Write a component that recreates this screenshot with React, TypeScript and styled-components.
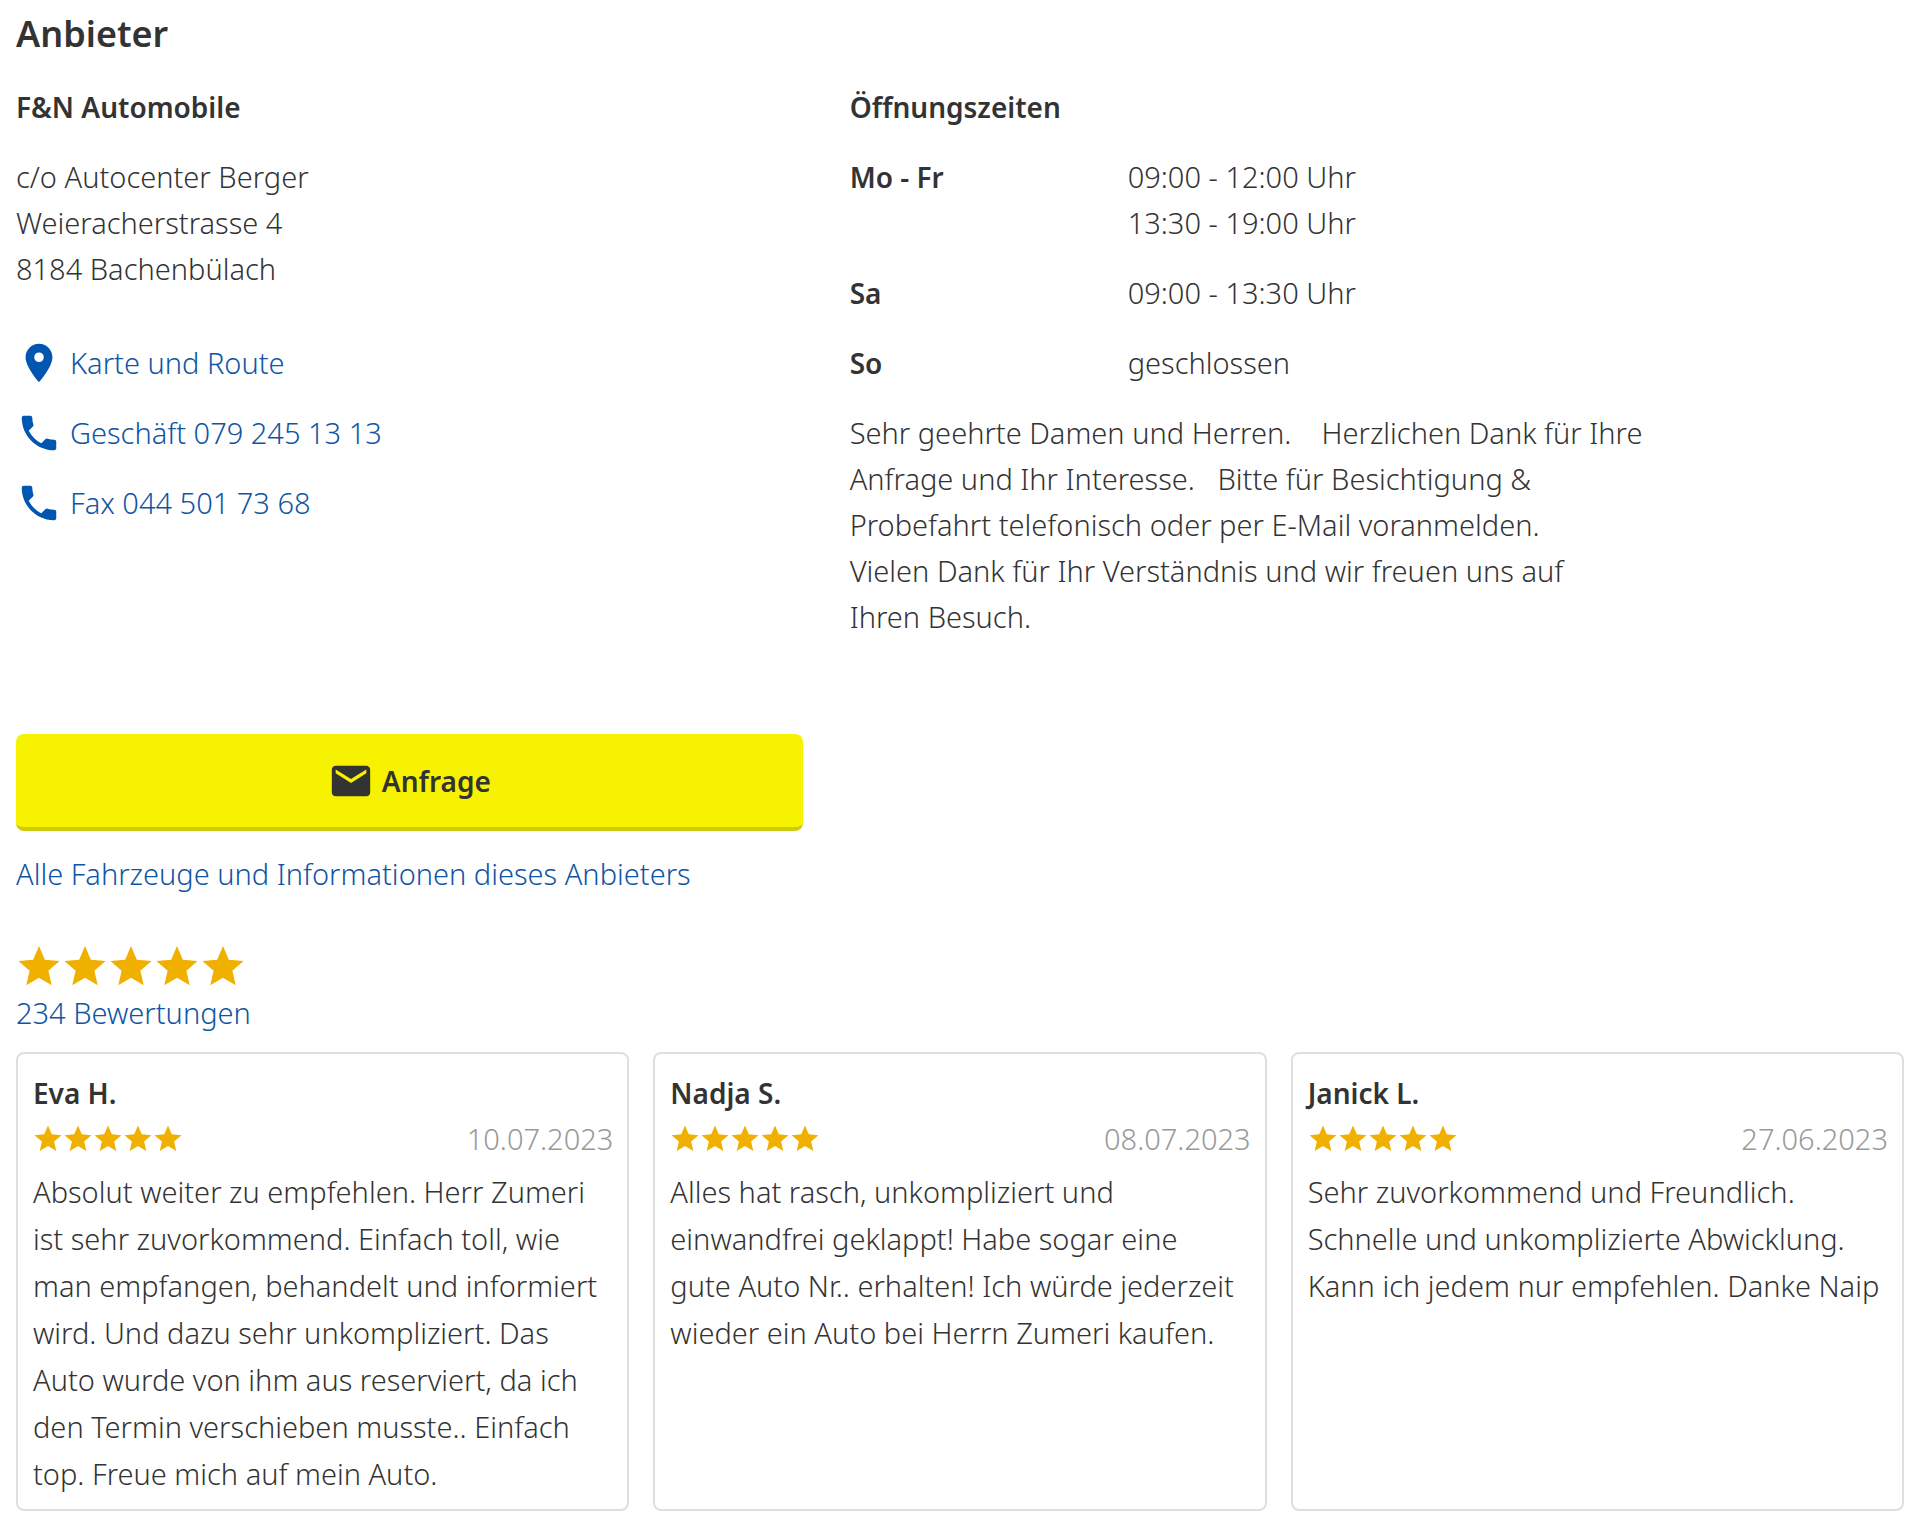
import React from 'react';
import styled, { createGlobalStyle } from 'styled-components';

const color = {
  text: '#333333',
  link: '#0f55a5',
  linkIcon: '#0056b0',
  muted: '#999999',
  star: '#f0b000',
  border: '#dfdfdf',
  action: '#f7f200',
  actionEdge: '#cccb0c',
};

const GlobalStyle = createGlobalStyle`
  *, *::before, *::after { box-sizing: border-box; }
  body {
    margin: 0;
    background: #ffffff;
    color: ${color.text};
    font-family: "Noto Sans", "Open Sans", sans-serif;
    font-size: 29px;
    font-weight: 350;
    line-height: 46px;
  }
`;

const Page = styled.main`
  padding: 8px 16px 14px;
`;

const Title = styled.h2`
  margin: 0 0 24px;
  font-size: 36px;
  font-weight: 560;
  line-height: 52px;
`;

const Columns = styled.div`
  display: grid;
  grid-template-columns: 5fr 7fr;
`;

const HoursColumn = styled.section`
  padding-left: 47px;
`;

const Subtitle = styled.h3`
  margin: 0 0 24px;
  font-size: 28px;
  font-weight: 600;
  line-height: 46px;
`;

const Address = styled.address`
  margin-bottom: 48px;
  font-style: normal;
`;

const ContactList = styled.ul`
  display: flex;
  flex-direction: column;
  align-items: flex-start;
  gap: 24px;
  margin: 0;
  padding: 0;
  list-style: none;
`;

const Link = styled.a`
  color: ${color.link};
  text-decoration: none;
  &:hover { text-decoration: underline; }
`;

const ContactLink = styled(Link)`
  display: flex;
  align-items: center;
  gap: 8px;
`;

const Icon = styled.svg<{ $size: number; $color: string }>`
  display: block;
  flex: none;
  width: ${(p) => p.$size}px;
  height: ${(p) => p.$size}px;
  fill: ${(p) => p.$color};
`;

const Hours = styled.dl`
  display: grid;
  grid-template-columns: 278px 1fr;
  row-gap: 24px;
  margin: 0 0 24px;
`;

const Day = styled.dt`
  font-size: 28px;
  font-weight: 600;
`;

const Times = styled.dd`
  margin: 0;
`;

const Notice = styled.p`
  max-width: 808px;
  margin: 0;
`;

const Actions = styled.div`
  display: flex;
  flex-direction: column;
  align-items: flex-start;
  gap: 20px;
  width: calc(100% * 5 / 12);
  margin-top: 94px;
`;

const RequestButton = styled.button`
  display: flex;
  align-items: center;
  justify-content: center;
  gap: 8px;
  width: 100%;
  padding: 24px 16px 23px;
  border: 0;
  border-bottom: 4px solid ${color.actionEdge};
  border-radius: 8px;
  background: ${color.action};
  color: ${color.text};
  font: inherit;
  font-size: 28px;
  font-weight: 600;
  cursor: pointer;
`;

const Rating = styled.div`
  display: flex;
  flex-direction: column;
  align-items: flex-start;
  margin: 47px 0 16px;
`;

const StarRow = styled.div`
  display: flex;
`;

const Reviews = styled.div`
  display: grid;
  grid-template-columns: repeat(3, 1fr);
  gap: 24px;
`;

const Card = styled.article`
  padding: 16px 14px 12px 15px;
  border: 2px solid ${color.border};
  border-radius: 8px;
`;

const Reviewer = styled.h4`
  margin: 0;
  font-size: 28px;
  font-weight: 600;
  line-height: 46px;
`;

const Meta = styled.div`
  display: flex;
  align-items: center;
  justify-content: space-between;
`;

const ReviewDate = styled.time`
  color: ${color.muted};
`;

const ReviewText = styled.p`
  margin: 6px 0 0;
  line-height: 47px;
`;

const PLACE = 'M12 2C8.13 2 5 5.13 5 9c0 5.25 7 13 7 13s7-7.75 7-13c0-3.87-3.13-7-7-7zm0 9.5a2.5 2.5 0 0 1 0-5 2.5 2.5 0 0 1 0 5z';
const PHONE = 'M6.62 10.79c1.44 2.83 3.76 5.14 6.59 6.59l2.2-2.2c.27-.27.67-.36 1.02-.24 1.12.37 2.33.57 3.57.57.55 0 1 .45 1 1V20c0 .55-.45 1-1 1-9.39 0-17-7.61-17-17 0-.55.45-1 1-1h3.5c.55 0 1 .45 1 1 0 1.25.2 2.45.57 3.57.11.35.03.74-.25 1.02l-2.2 2.2z';
const MAIL = 'M20 4H4c-1.1 0-1.99.9-1.99 2L2 18c0 1.1.9 2 2 2h16c1.1 0 2-.9 2-2V6c0-1.1-.9-2-2-2zm0 4l-8 5-8-5V6l8 5 8-5v2z';
const STAR = 'M12 1.1L15.03 8.23 22.75 8.91 16.9 13.99 18.64 21.54 12 17.55 5.36 21.54 7.1 13.99 1.25 8.91 8.97 8.23z';

function Glyph({ path, size = 46, fill }: { path: string; size?: number; fill: string }) {
  return (
    <Icon $size={size} $color={fill} viewBox="0 0 24 24" aria-hidden="true">
      <path d={path} />
    </Icon>
  );
}

function Stars({ size }: { size: number }) {
  return (
    <StarRow role="img" aria-label="5 von 5 Sternen">
      {[1, 2, 3, 4, 5].map((n) => (
        <Glyph key={n} path={STAR} size={size} fill={color.star} />
      ))}
    </StarRow>
  );
}

const contacts = [
  { icon: PLACE, label: 'Karte und Route', href: '#karte' },
  { icon: PHONE, label: 'Geschäft 079 245 13 13', href: 'tel:+41792451313' },
  { icon: PHONE, label: 'Fax 044 501 73 68', href: 'tel:+41445017368' },
];

const openingHours = [
  { day: 'Mo - Fr', times: ['09:00 - 12:00 Uhr', '13:30 - 19:00 Uhr'] },
  { day: 'Sa', times: ['09:00 - 13:30 Uhr'] },
  { day: 'So', times: ['geschlossen'] },
];

const reviews = [
  {
    name: 'Eva H.',
    date: '10.07.2023',
    text: 'Absolut weiter zu empfehlen. Herr Zumeri ist sehr zuvorkommend. Einfach toll, wie man empfangen, behandelt und informiert wird. Und dazu sehr unkompliziert. Das Auto wurde von ihm aus reserviert, da ich den Termin verschieben musste.. Einfach top. Freue mich auf mein Auto.',
  },
  {
    name: 'Nadja S.',
    date: '08.07.2023',
    text: 'Alles hat rasch, unkompliziert und einwandfrei geklappt! Habe sogar eine gute\u00a0Auto Nr.. erhalten! Ich würde jederzeit wieder ein Auto bei Herrn Zumeri kaufen.',
  },
  {
    name: 'Janick L.',
    date: '27.06.2023',
    text: 'Sehr zuvorkommend und Freundlich. Schnelle und unkomplizierte Abwicklung. Kann ich jedem nur empfehlen. Danke Naip',
  },
];

export default function App() {
  return (
    <Page>
      <GlobalStyle />
      <Title>Anbieter</Title>
      <Columns>
        <section>
          <Subtitle>F&amp;N Automobile</Subtitle>
          <Address>
            c/o Autocenter Berger
            <br />
            Weieracherstrasse 4
            <br />
            8184 Bachenbülach
          </Address>
          <ContactList>
            {contacts.map((c) => (
              <li key={c.label}>
                <ContactLink href={c.href}>
                  <Glyph path={c.icon} fill={color.linkIcon} />
                  {c.label}
                </ContactLink>
              </li>
            ))}
          </ContactList>
        </section>
        <HoursColumn>
          <Subtitle>Öffnungszeiten</Subtitle>
          <Hours>
            {openingHours.map((h) => (
              <React.Fragment key={h.day}>
                <Day>{h.day}</Day>
                <Times>
                  {h.times.map((t) => (
                    <div key={t}>{t}</div>
                  ))}
                </Times>
              </React.Fragment>
            ))}
          </Hours>
          <Notice>
            {'Sehr geehrte Damen und Herren.\u00a0\u00a0\u00a0 Herzlichen Dank für Ihre Anfrage und Ihr Interesse.\u00a0\u00a0 Bitte für Besichtigung & Probefahrt telefonisch oder per E-Mail voranmelden. Vielen\u00a0Dank für Ihr Verständnis und wir freuen uns auf Ihren\u00a0Besuch.'}
          </Notice>
        </HoursColumn>
      </Columns>
      <Actions>
        <RequestButton type="button">
          <Glyph path={MAIL} fill={color.text} />
          Anfrage
        </RequestButton>
        <Link href="#anbieter">Alle Fahrzeuge und Informationen dieses Anbieters</Link>
      </Actions>
      <Rating>
        <Stars size={46} />
        <Link href="#bewertungen">234 Bewertungen</Link>
      </Rating>
      <Reviews>
        {reviews.map((r) => (
          <Card key={r.name}>
            <Reviewer>{r.name}</Reviewer>
            <Meta>
              <Stars size={30} />
              <ReviewDate>{r.date}</ReviewDate>
            </Meta>
            <ReviewText>{r.text}</ReviewText>
          </Card>
        ))}
      </Reviews>
    </Page>
  );
}
